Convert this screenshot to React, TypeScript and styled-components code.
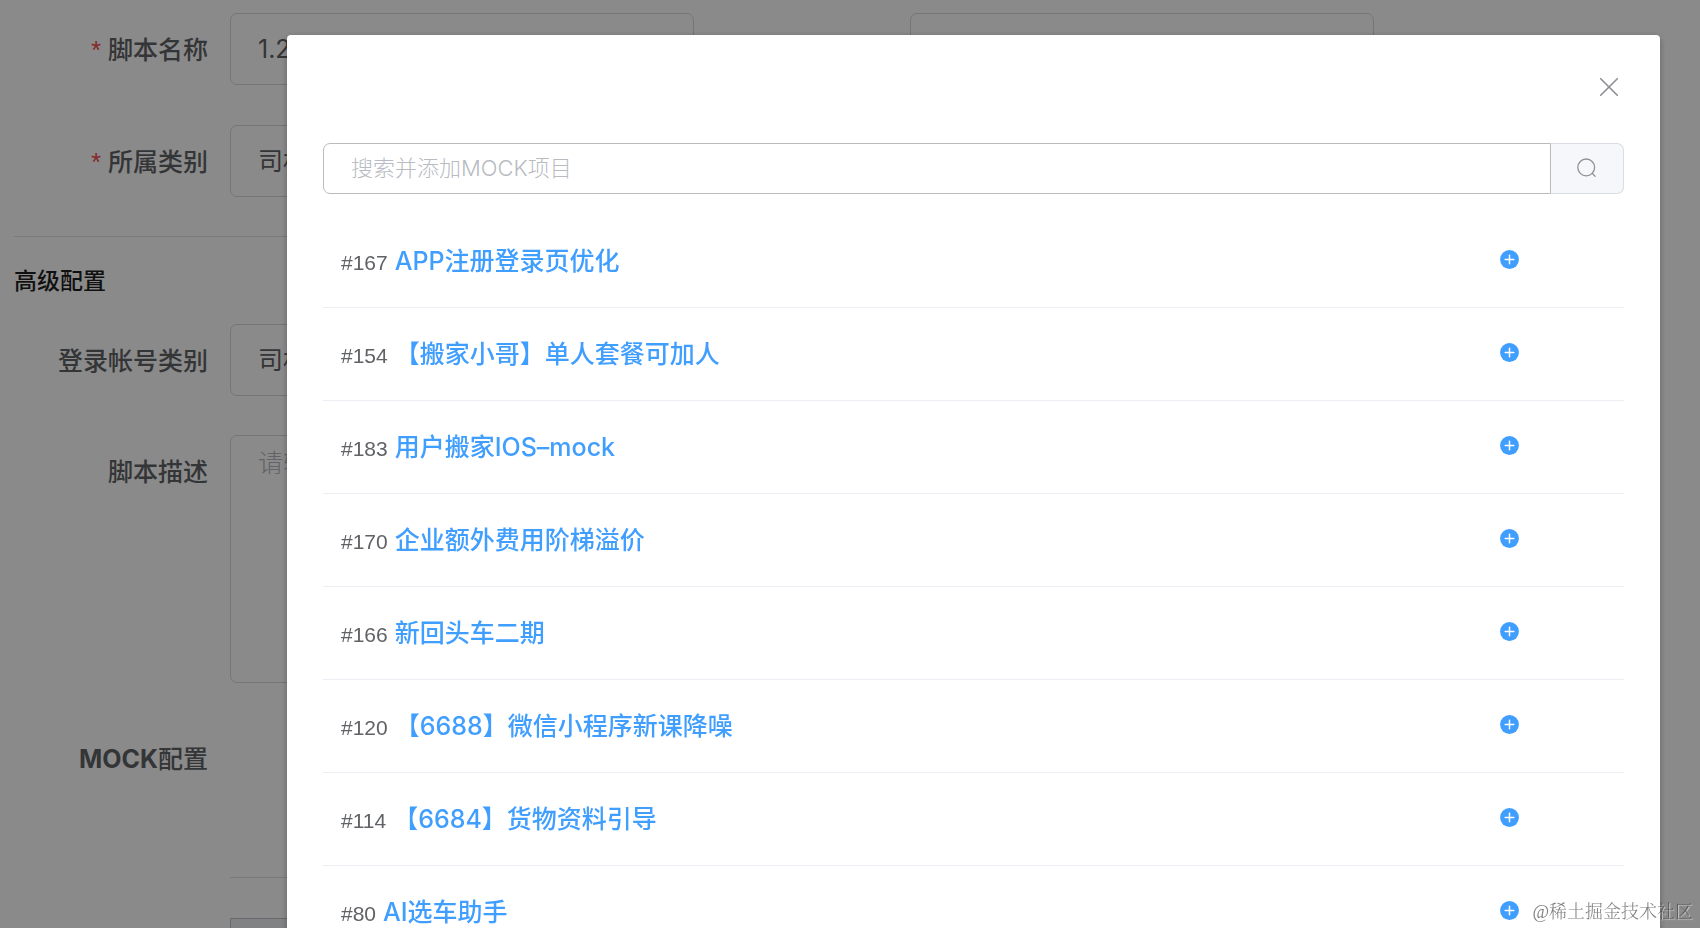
import React from 'react';
import styled, { createGlobalStyle } from 'styled-components';

const GlobalStyle = createGlobalStyle`
  *, *::before, *::after { box-sizing: border-box; }
  html, body, #root { height: 100%; }
  body {
    margin: 0;
    overflow: hidden;
    background: #fff;
    color: #606266;
    font-family: "Liberation Sans", "Noto Sans CJK SC", sans-serif;
  }
  button, input, select, textarea { font-family: inherit; }
`;

const interStack = '"Inter", "Noto Sans CJK SC", sans-serif';

const Page = styled.main`
  height: 100%;
  overflow: hidden;
  padding: 13px 14px 0;
`;

const FormRow = styled.div<{ $compact?: boolean }>`
  display: flex;
  margin-bottom: ${p => (p.$compact ? 39 : 40)}px;
`;

const Field = styled.div<{ $wide?: boolean }>`
  display: flex;
  flex: 0 0 ${p => (p.$wide ? '80vw' : '40vw')};
`;

const Label = styled.label`
  flex: 0 0 216px;
  padding: 2px 22px 0 0;
  text-align: right;
  font-size: 25px;
  line-height: 70px;
  font-weight: 500;
  white-space: nowrap;
`;

const Star = styled.span`
  margin-right: 7px;
  color: #f5484f;
`;

const control = `
  flex: 1;
  min-width: 0;
  border: 1px solid #d6d8de;
  border-radius: 7px;
  background: #fff;
  color: #606266;
  font-size: 25px;
  outline: none;
  &::placeholder { color: #b4b8c0; opacity: 1; }
`;

const TextInput = styled.input`
  ${control}
  height: 72px;
  padding: 0 27px;
  font-family: ${interStack};
`;

const Select = styled.select`
  ${control}
  height: 72px;
  padding: 0 27px;
  appearance: none;
`;

const TextArea = styled.textarea`
  ${control}
  height: 248px;
  padding: 9px 27px;
  line-height: 36px;
  font-weight: 300;
  resize: none;
`;

const Divider = styled.hr`
  width: 80vw;
  height: 1px;
  margin: -1px 0 24px;
  border: 0;
  background: #dcdfe6;
`;

const SectionTitle = styled.h2`
  margin: 0 0 23px;
  color: #1f1f1f;
  font-size: 23px;
  line-height: 40px;
  font-weight: 500;
`;

const MockHeading = styled.div`
  width: 216px;
  margin-bottom: 83px;
  padding: 2px 22px 0 0;
  text-align: right;
  font-family: ${interStack};
  font-size: 25px;
  line-height: 70px;
  font-weight: 500;
  white-space: nowrap;
`;

const MockPanel = styled.div`
  width: 64vw;
  height: 200px;
  margin-left: 216px;
  border-top: 1px solid #dcdfe6;
  padding-top: 40px;
`;

const MockTable = styled.div`
  height: 100px;
  border: 1px solid #c0c2c8;
  background: #eff0f2;
`;

const Overlay = styled.div`
  position: fixed;
  inset: 0;
  overflow: hidden;
  padding: 35px 40px 0 287px;
  background: rgba(0, 0, 0, 0.46);
`;

const Dialog = styled.section`
  padding: 0 36px 36px;
  border-radius: 4px;
  background: #fff;
  box-shadow: 0 2px 6px rgba(0, 0, 0, 0.3);
`;

const DialogHeader = styled.header`
  display: flex;
  justify-content: flex-end;
  align-items: center;
  height: 108px;
  padding: 0 5px 4px 0;
`;

const IconButton = styled.button`
  display: flex;
  padding: 0;
  border: 0;
  background: none;
  cursor: pointer;
`;

const SearchBar = styled.form`
  display: flex;
  height: 51px;
  margin-bottom: 21px;
`;

const SearchInput = styled.input`
  flex: 1;
  min-width: 0;
  padding: 0 27px 2px;
  border: 1px solid #b9bbbf;
  border-radius: 7px 0 0 7px;
  color: #606266;
  font-family: ${interStack};
  font-size: 22px;
  font-weight: 300;
  outline: none;
  &::placeholder { color: #b8bbc2; opacity: 1; }
`;

const SearchButton = styled.button`
  display: flex;
  align-items: center;
  justify-content: center;
  width: 73px;
  padding: 0 0 2px;
  border: 1px solid #d9dce3;
  border-left: 0;
  border-radius: 0 7px 7px 0;
  background: #f5f7fa;
  cursor: pointer;
`;

const ProjectList = styled.ul`
  margin: 0;
  padding: 0;
  list-style: none;
`;

const ProjectRow = styled.li`
  display: grid;
  grid-template-columns: 1fr 124px;
  align-items: center;
  height: 93px;
  padding: 0 0 3px 18px;
  border-bottom: 1px solid #ebeef2;
`;

const ProjectText = styled.div`
  display: flex;
  align-items: baseline;
  gap: 7px;
  padding-top: 5px;
  line-height: 36px;
  white-space: nowrap;
`;

const ProjectId = styled.span`
  font-size: 21px;
`;

const ProjectLink = styled.a`
  color: #409eff;
  font-family: ${interStack};
  font-size: 25px;
  font-weight: 500;
  text-decoration: none;
`;

const Watermark = styled.div`
  position: fixed;
  right: 7px;
  bottom: 3px;
  color: rgba(60, 60, 60, 0.65);
  font-family: "Liberation Serif", "Noto Serif CJK SC", "Noto Sans CJK SC", serif;
  font-size: 18px;
  line-height: 26px;
  font-weight: 300;
  text-shadow: 1px 1px 1px rgba(255, 255, 255, 0.6);
`;

const CloseIcon = () => (
  <svg width="20" height="20" viewBox="0 0 20 20" fill="none" stroke="#8c8e92" strokeWidth="1.6" strokeLinecap="round" aria-hidden="true">
    <path d="M1.7 1.7 18.3 18.3M18.3 1.7 1.7 18.3" />
  </svg>
);

const SearchIcon = () => (
  <svg width="20" height="20" viewBox="0 0 20 20" fill="none" stroke="#8e9196" strokeWidth="1.3" strokeLinecap="round" aria-hidden="true">
    <circle cx="9.2" cy="9.4" r="8.4" />
    <path d="m15.2 15.3 3 3.1" />
  </svg>
);

const PlusIcon = () => (
  <svg width="19" height="19" viewBox="0 0 19 19" aria-hidden="true">
    <circle cx="9.5" cy="9.5" r="9.4" fill="#409eff" />
    <path d="M9.5 5.2v8.6M5.2 9.5h8.6" stroke="#fff" strokeWidth="1.5" strokeLinecap="round" />
  </svg>
);

const projects = [
  { id: 167, name: 'APP注册登录页优化' },
  { id: 154, name: '【搬家小哥】单人套餐可加人' },
  { id: 183, name: '用户搬家IOS–mock' },
  { id: 170, name: '企业额外费用阶梯溢价' },
  { id: 166, name: '新回头车二期' },
  { id: 120, name: '【6688】微信小程序新课降噪' },
  { id: 114, name: '【6684】货物资料引导' },
  { id: 80, name: 'AI选车助手' },
];

export default function App() {
  return (
    <>
      <GlobalStyle />
      <Page>
        <FormRow>
          <Field>
            <Label htmlFor="script-name"><Star>*</Star>脚本名称</Label>
            <TextInput id="script-name" defaultValue="1.2" />
          </Field>
          <Field>
            <Label as="span" />
            <TextInput aria-label="版本" />
          </Field>
        </FormRow>
        <FormRow>
          <Field>
            <Label htmlFor="category"><Star>*</Star>所属类别</Label>
            <Select id="category"><option>司机</option></Select>
          </Field>
        </FormRow>
        <Divider />
        <SectionTitle>高级配置</SectionTitle>
        <FormRow $compact>
          <Field>
            <Label htmlFor="account-type">登录帐号类别</Label>
            <Select id="account-type"><option>司机</option></Select>
          </Field>
        </FormRow>
        <FormRow $compact>
          <Field $wide>
            <Label htmlFor="description">脚本描述</Label>
            <TextArea id="description" placeholder="请输入" />
          </Field>
        </FormRow>
        <MockHeading><b>MOCK</b>配置</MockHeading>
        <MockPanel><MockTable /></MockPanel>
      </Page>

      <Overlay>
        <Dialog role="dialog" aria-modal="true" aria-label="添加MOCK项目">
          <DialogHeader>
            <IconButton type="button" aria-label="关闭"><CloseIcon /></IconButton>
          </DialogHeader>
          <SearchBar role="search" onSubmit={e => e.preventDefault()}>
            <SearchInput aria-label="搜索并添加MOCK项目" placeholder="搜索并添加MOCK项目" />
            <SearchButton type="submit" aria-label="搜索"><SearchIcon /></SearchButton>
          </SearchBar>
          <ProjectList>
            {projects.map(({ id, name }) => (
              <ProjectRow key={id}>
                <ProjectText>
                  <ProjectId>#{id}</ProjectId>
                  <ProjectLink href={`#${id}`}>{name}</ProjectLink>
                </ProjectText>
                <IconButton type="button" aria-label={`添加 ${name}`}><PlusIcon /></IconButton>
              </ProjectRow>
            ))}
          </ProjectList>
        </Dialog>
      </Overlay>
      <Watermark>@稀土掘金技术社区</Watermark>
    </>
  );
}
